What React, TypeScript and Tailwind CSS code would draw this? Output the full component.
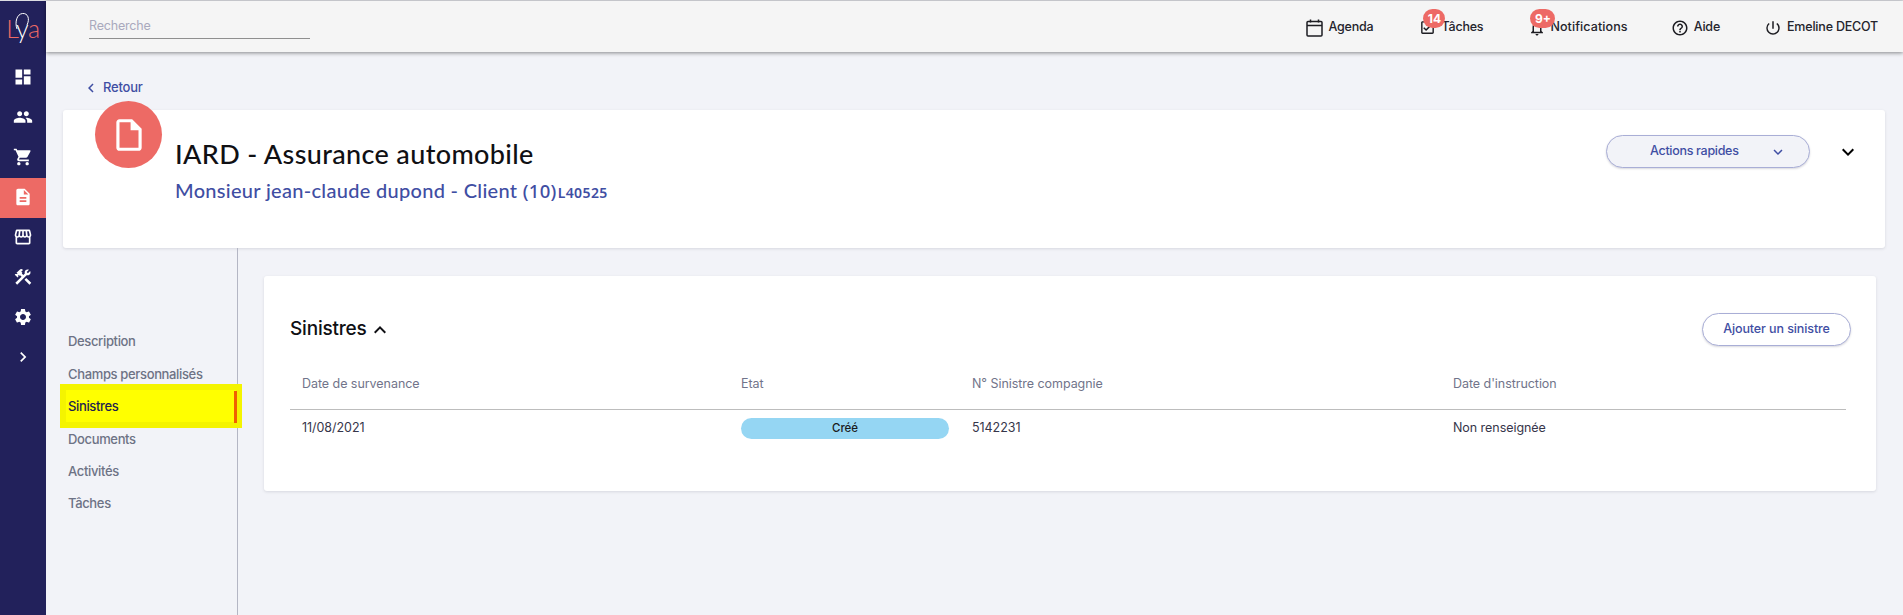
import React from "react";
import {
  MdDashboard,
  MdPeople,
  MdShoppingCart,
  MdDescription,
  MdOutlineStorefront,
  MdConstruction,
  MdSettings,
  MdChevronRight,
  MdChevronLeft,
  MdOutlineInsertDriveFile,
  MdExpandMore,
  MdExpandLess,
  MdHelpOutline,
  MdPowerSettingsNew,
  MdOutlineNotifications,
  MdOutlineCheckBox,
} from "react-icons/md";

const UI = "font-['Inter','Liberation_Sans',sans-serif]";
const HEAD = "font-['Lato','Noto_Sans',sans-serif]";
const NUM = "font-['Noto_Sans',sans-serif]";

function Agenda() {
  return (
    <svg width="17" height="18" viewBox="0 0 17 18" fill="none" stroke="#1d1d22" strokeWidth="1.5">
      <rect x="1" y="2.5" width="15" height="14.5" rx="1" />
      <path d="M1 6.5h15M4.5 0.5v3M12.5 0.5v3" />
    </svg>
  );
}

function Side({ icon, active }: { icon: React.ReactNode; active?: boolean }) {
  return (
    <div className={`flex h-10 items-center justify-center pb-[3px] text-white text-[20px] ${active ? "bg-[#ed6a65]" : ""}`}>
      {icon}
    </div>
  );
}

function Top({ icon, label, badge, mr, badgeClass, track }: { icon: React.ReactNode; label: string; badge?: string; mr: string; badgeClass?: string; track?: string }) {
  return (
    <div className={`relative flex items-center gap-[5px] ${mr}`}>
      {icon}
      <span className={`text-[12.5px] font-medium text-[#24242c] ${track ?? "tracking-[-0.2px]"}`}>{label}</span>
      {badge && (
        <span className={`absolute flex h-[19px] items-center justify-center rounded-full bg-[#ed6a65] text-[12px] font-bold text-white ${badgeClass}`}>
          {badge}
        </span>
      )}
    </div>
  );
}

export default function App() {
  const nav = ["Description", "Champs personnalisés", "Sinistres", "Documents", "Activités", "Tâches"];
  return (
    <div className={`flex h-[615px] w-[1903px] flex-col overflow-hidden bg-[#f2f3f8] ${UI}`}>
      <div className="h-px shrink-0 bg-[#dcdde2]" />
      <div className="flex min-h-0 flex-1">
        <aside className="flex w-[46px] shrink-0 flex-col bg-[#22215b]">
          <div className="relative flex h-[57px] items-start justify-center pt-[14px]">
            <span className={`${HEAD} text-[25px] leading-[26px] font-light text-[#ed6a65] tracking-[-0.4px]`}>
              L<span className="text-white">y</span>a
            </span>
            <svg className="absolute left-[13px] top-[11px]" width="20" height="27" viewBox="0 0 20 27" fill="none" stroke="#ffffff" strokeWidth="1">
              <path d="M4 17C1.5 10 4 2 9.5 1.5C15 1 17 7 14 13" />
            </svg>
          </div>
          <Side icon={<MdDashboard />} />
          <Side icon={<MdPeople />} />
          <Side icon={<MdShoppingCart />} />
          <Side icon={<MdDescription />} active />
          <Side icon={<MdOutlineStorefront />} />
          <Side icon={<MdConstruction />} />
          <Side icon={<MdSettings />} />
          <Side icon={<MdChevronRight />} />
        </aside>

        <div className="flex min-w-0 flex-1 flex-col">
          <header className="relative z-10 flex h-[51px] shrink-0 items-center bg-[#f5f5f5] shadow-[0_1px_4px_rgba(0,0,0,0.45)]">
            <div className="ml-[43px] mt-[2px] w-[221px] border-b border-[#8f8f8f] pb-[3px] pt-[1px] text-[12.5px] tracking-[-0.2px] text-[#a9a9bd]">
              Recherche
            </div>
            <div className="ml-auto mt-[2px] flex items-center pr-[25px]">
              <Top icon={<Agenda />} label="Agenda" mr="mr-[46px]" />
              <Top
                icon={<MdOutlineCheckBox className="text-[17px] text-[#1d1d22]" />}
                label="Tâches"
                mr="mr-[45px]"
                badge="14"
                badgeClass="left-[4px] top-[-9px] w-[22px]"
              />
              <Top
                icon={<MdOutlineNotifications className="text-[18px] text-[#1d1d22] -mr-[1px]" />}
                label="Notifications"
                mr="mr-[43px]"
                badge="9+"
                badgeClass="left-[2px] top-[-9px] w-[25px]"
                track="tracking-[0.1px]"
              />
              <Top icon={<MdHelpOutline className="text-[18px] text-[#1d1d22]" />} label="Aide" mr="mr-[44px]" />
              <Top icon={<MdPowerSettingsNew className="text-[18px] text-[#1d1d22]" />} label="Emeline DECOT" mr="" />
            </div>
          </header>

          <main className="flex min-h-0 flex-1 flex-col">
            <div className="ml-[36px] mt-[27px] flex h-[18px] items-center gap-[3px] text-[13px] font-medium tracking-[-0.2px] text-[#3f4ea3]">
              <MdChevronLeft className="text-[18px]" />
              <span>Retour</span>
            </div>

            <section className="relative ml-[17px] mr-[18px] mt-[13px] flex h-[138px] shrink-0 items-start rounded-[3px] bg-white pl-[112px] pr-[25px] pt-[27px] shadow-[0_1px_3px_rgba(60,60,90,0.15)]">
              <div className="absolute left-[32px] top-[-9px] flex h-[67px] w-[67px] items-center justify-center rounded-full bg-[#ed6a65] text-[38px] text-white">
                <MdOutlineInsertDriveFile />
              </div>
              <div className={HEAD}>
                <h1 className="text-[27px] leading-[34px] font-medium tracking-[0.35px] text-[#101014]">IARD - Assurance automobile</h1>
                <div className="mt-[6px] flex items-baseline text-[#3f4ea3]">
                  <span className="text-[20px] leading-[26px] font-medium tracking-[0.3px]">
                    Monsieur jean-claude dupond - Client <span className={`${NUM} text-[18.5px]`}>(10)</span>
                  </span>
                  <span className={`${NUM} ml-[1px] text-[14px] font-semibold tracking-[0.4px]`}>L40525</span>
                </div>
              </div>
              <div className="ml-auto mt-[-2px] flex items-center gap-[26px]">
                <button className="flex h-[33px] w-[204px] items-center justify-start gap-[30px] rounded-full border border-[#a9aed6] bg-[#f2f3f8] pl-[43px] text-[12.5px] font-medium tracking-[-0.3px] text-[#3f4ea3] shadow-[0_1px_2px_rgba(60,60,90,0.2)]">
                  <span>Actions rapides</span>
                  <MdExpandMore className="text-[18px]" />
                </button>
                <MdExpandMore className="text-[24px] text-black" />
              </div>
            </section>

            <div className="flex min-h-0 flex-1">
              <nav className="relative flex w-[192px] shrink-0 flex-col border-r border-[#b4b6c4] pt-[78px]">
                {nav.map((n) => (
                  <div
                    key={n}
                    className={`relative flex h-[32.4px] items-center pl-[22px] text-[13px] font-medium tracking-[-0.35px] ${n === "Sinistres" ? "text-[#1e1e50]" : "text-[#6d7285]"}`}
                  >
                    {n === "Sinistres" && (
                      <span className="absolute left-[14px] right-[-5px] top-[-7px] z-0 h-[44px] border-[6px] border-[#f4f400] bg-[#ffff00]" />
                    )}
                    {n === "Sinistres" && <span className="absolute right-0 top-[0px] z-10 h-[32px] w-[3px] bg-[#f06000]" />}
                    <span className="relative z-10">{n}</span>
                  </div>
                ))}
              </nav>

              <section className="ml-[26px] mr-[27px] mt-[28px] h-[215px] flex-1 rounded-[3px] bg-white px-[26px] shadow-[0_1px_3px_rgba(60,60,90,0.15)]">
                <div className="flex items-center justify-between pt-[37px]">
                  <div className="flex items-center gap-[1px] text-[19px] font-medium tracking-[-0.2px] text-[#101014]">
                    <span>Sinistres</span>
                    <MdExpandLess className="text-[24px]" />
                  </div>
                  <button className="flex h-[33px] w-[149px] -mr-[1px] items-center justify-center rounded-full border border-[#a9aed6] bg-white text-[12.5px] font-medium tracking-[-0.1px] text-[#3f4ea3] shadow-[0_1px_2px_rgba(60,60,90,0.2)]">
                    Ajouter un sinistre
                  </button>
                </div>
                <div className="mr-[4px] mt-[29px] grid grid-cols-[439px_231px_481px_1fr] border-b border-[#bdbdbd] pb-[15px] pl-[12px] text-[12.5px] tracking-[-0.05px] text-[#71748a]">
                  <span>Date de survenance</span>
                  <span>Etat</span>
                  <span>N° Sinistre compagnie</span>
                  <span>Date d'instruction</span>
                </div>
                <div className="mr-[4px] mt-[8px] grid grid-cols-[439px_231px_481px_1fr] items-center pl-[12px] text-[12.5px] tracking-[-0.05px] text-[#36364a]">
                  <span>11/08/2021</span>
                  <span className="flex h-[21px] w-[208px] items-center justify-center rounded-full bg-[#95d6f3] text-[11.5px] font-medium text-[#1a1a1a]">
                    Créé
                  </span>
                  <span>5142231</span>
                  <span>Non renseignée</span>
                </div>
              </section>
            </div>
          </main>
        </div>
      </div>
    </div>
  );
}
